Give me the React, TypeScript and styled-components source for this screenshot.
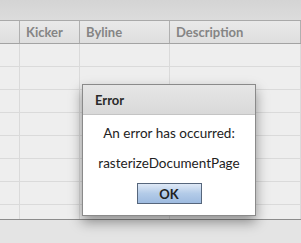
import React from "react"
import styled, { createGlobalStyle } from "styled-components"

const GlobalStyle = createGlobalStyle`
  html, body {
    margin: 0;
    padding: 0;
    background: #e4e4e4;
    font-family: Lato, "Open Sans", sans-serif;
  }
`

const COLUMNS = [20, 60, 90, 131]
const ROW_COUNT = 8

const Page = styled.div`
  position: relative;
  width: 301px;
  height: 243px;
  overflow: hidden;
  display: flex;
  flex-direction: column;
`

const Toolbar = styled.div`
  height: 20px;
  background: linear-gradient(#d4d4d4, #dcdcdc);
`

const Table = styled.div`
  display: flex;
  flex-direction: column;
  border-top: 1px solid #a9a9a9;
  border-bottom: 1px solid #8c8c8c;
`

const HeaderRow = styled.div`
  display: flex;
  height: 22px;
  background: linear-gradient(#e9e9e9, #dedede);
  border-bottom: 1px solid #a3a3a3;
`

const HeaderCell = styled.div<{ $w: number }>`
  flex: 0 0 ${(p) => p.$w}px;
  box-sizing: border-box;
  border-right: 1px solid #b0b0b0;
  padding-left: 6px;
  display: flex;
  align-items: center;
  font-size: 13px;
  font-weight: 700;
  color: #858585;
  white-space: nowrap;
`

const Body = styled.div`
  height: 175px;
  overflow: hidden;
  background: #eeeeee;
`

const Row = styled.div`
  display: flex;
  height: 23px;
  box-sizing: border-box;
  border-bottom: 1px solid #dadada;
`

const Cell = styled.div<{ $w: number }>`
  flex: 0 0 ${(p) => p.$w}px;
  box-sizing: border-box;
  border-right: 1px solid #dadada;
`

const Footer = styled.div`
  flex: 1;
  background: #e4e4e4;
`

const Dialog = styled.div`
  position: absolute;
  left: 82px;
  top: 84px;
  width: 174px;
  height: 132px;
  box-sizing: border-box;
  border: 1px solid #8a8a8a;
  background: #ffffff;
  box-shadow: 0 6px 12px rgba(0, 0, 0, 0.4);
  display: flex;
  flex-direction: column;
`

const TitleBar = styled.div`
  height: 30px;
  box-sizing: border-box;
  background: linear-gradient(#e6e6e6, #d9d9d9);
  border-bottom: 1px solid #c4c4c4;
  padding-left: 12px;
  display: flex;
  align-items: center;
  font-size: 13px;
  font-weight: 700;
  color: #2a2a2a;
`

const Content = styled.div`
  flex: 1;
  display: flex;
  flex-direction: column;
  align-items: center;
  padding-top: 10px;
`

const Message = styled.div<{ $gap: number }>`
  font-size: 13.5px;
  color: #222;
  line-height: 17px;
  margin-bottom: ${(p) => p.$gap}px;
`

const OkButton = styled.button`
  width: 65px;
  height: 21px;
  border: 1px solid #56667c;
  background: linear-gradient(#dfe9f6, #b3cbe8 50%, #9ebbe0);
  font-family: Lato, "Open Sans", sans-serif;
  font-size: 13px;
  font-weight: 700;
  color: #222;
  padding: 0;
`

export default function App() {
  return (
    <Page>
      <GlobalStyle />
      <Toolbar />
      <Table>
        <HeaderRow>
          <HeaderCell $w={COLUMNS[0]} />
          <HeaderCell $w={COLUMNS[1]}>Kicker</HeaderCell>
          <HeaderCell $w={COLUMNS[2]}>Byline</HeaderCell>
          <HeaderCell $w={COLUMNS[3]}>Description</HeaderCell>
        </HeaderRow>
        <Body>
          {Array.from({ length: ROW_COUNT }).map((_, i) => (
            <Row key={i}>
              {COLUMNS.map((w, j) => (
                <Cell key={j} $w={w} />
              ))}
            </Row>
          ))}
        </Body>
      </Table>
      <Footer />
      <Dialog>
        <TitleBar>Error</TitleBar>
        <Content>
          <Message $gap={13}>An error has occurred:</Message>
          <Message $gap={11}>rasterizeDocumentPage</Message>
          <OkButton>OK</OkButton>
        </Content>
      </Dialog>
    </Page>
  )
}
